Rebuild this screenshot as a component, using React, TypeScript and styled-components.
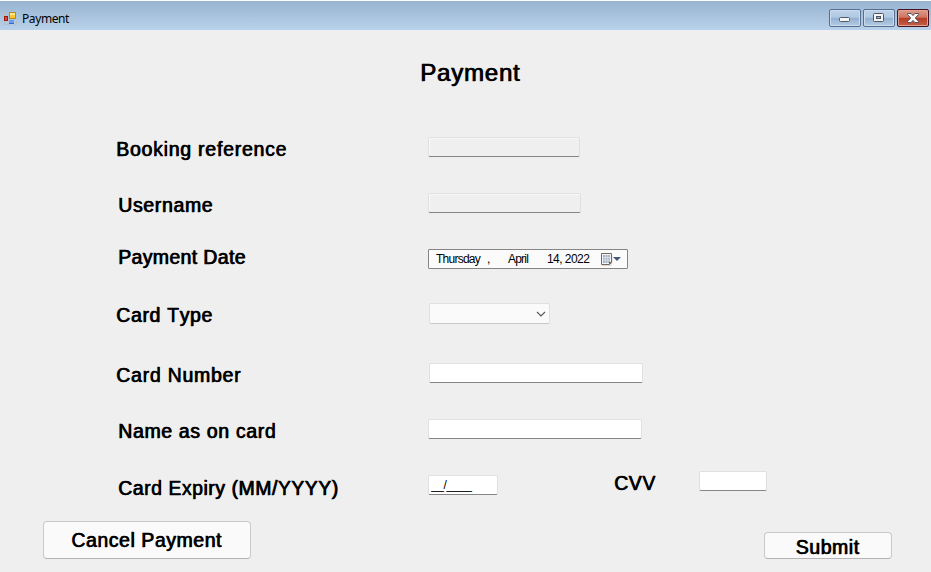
import React from "react";
import styled, { createGlobalStyle } from "styled-components";

const GlobalStyle = createGlobalStyle`
  * { box-sizing: border-box; }
  html, body { margin: 0; padding: 0; background: #efefef; overflow: hidden; }
`;

const Window = styled.div`
  display: flex;
  flex-direction: column;
  width: 931px;
  height: 572px;
  background: #efefef;
  color: #000;
  font-family: "Liberation Sans", Arial, sans-serif;
  font-kerning: none;
`;

const TitleBar = styled.header`
  display: flex;
  align-items: flex-start;
  height: 30px;
  padding: 8px 2px 0 4px;
  border-top: 1px solid #fdfdfd;
  background: linear-gradient(#98b4d1, #b9d1ea);
`;

const AppIcon = styled.svg`
  flex: none;
  margin: 2px 5px 0 0;
`;

const Caption = styled.span`
  flex: 1;
  padding-top: 1px;
  font: 12px/18px "Noto Sans", "Open Sans", sans-serif;
  letter-spacing: -0.4px;
`;

const WindowButtons = styled.div`
  display: flex;
  gap: 2px;
`;

const WindowButton = styled.button<{ $close?: boolean }>`
  display: flex;
  align-items: center;
  justify-content: center;
  width: 32px;
  height: 18px;
  padding: 0;
  border: 1px solid ${(p) => (p.$close ? "#43131f" : "#566f91")};
  border-radius: 2px;
  box-shadow: inset 0 0 0 1px ${(p) => (p.$close ? "#e3a193" : "#cbdcee")};
  background: ${(p) =>
    p.$close
      ? "linear-gradient(#dc9c8c 0%, #cf7661 46%, #b63a22 50%, #c4614a 100%)"
      : "linear-gradient(#bed2e8 0%, #b0c8e2 46%, #94b0cf 50%, #b3cce5 100%)"};
`;

const Heading = styled.h1`
  height: 107px;
  margin: 0;
  padding: 29px 0 0 420px;
  font-size: 24px;
  font-weight: 400;
  line-height: 28px;
  letter-spacing: 0.8px;
  -webkit-text-stroke: 0.3px #000;
  text-shadow: 0.7px 0 #000;
`;

const Form = styled.form`
  display: flex;
  flex-direction: column;
`;

const Row = styled.div<{ $height: number }>`
  display: flex;
  align-items: flex-start;
  height: ${(p) => p.$height}px;
`;

const Label = styled.label<{ $indent: number; $width: number; $shift?: number; $spacing?: number }>`
  flex: none;
  width: ${(p) => p.$width}px;
  padding-left: ${(p) => p.$indent}px;
  margin-top: ${(p) => p.$shift ?? 0}px;
  font-size: 19.4px;
  line-height: 25px;
  white-space: nowrap;
  letter-spacing: ${(p) => p.$spacing ?? 0.8}px;
  -webkit-text-stroke: 0.3px #000;
  text-shadow: 0.7px 0 #000;
`;

const TextBox = styled.input<{ $width: number; $shift?: number }>`
  width: ${(p) => p.$width}px;
  height: 20px;
  margin: ${(p) => p.$shift ?? 0}px 0 0;
  padding: 0 2px;
  border: 1px solid #e0e0e0;
  border-bottom-color: #858585;
  border-radius: 2px;
  outline: none;
  background: #fff;
  color: #000;
  font: 12px "Liberation Sans", Arial, sans-serif;
  letter-spacing: -0.4px;
  &:disabled {
    background: #efefef;
    box-shadow: inset 1px 1px 0 #f8f8f8;
  }
`;

const DatePicker = styled.div`
  display: flex;
  align-items: center;
  width: 200px;
  height: 20px;
  padding: 0 6px 0 7px;
  border: 1px solid #848484;
  border-radius: 1px;
  background: #fbfbfb;
  font-size: 12px;
  line-height: 18px;
  white-space: pre;
`;

const DatePart = styled.span<{ $width: number; $spacing: number }>`
  flex: none;
  width: ${(p) => p.$width}px;
  letter-spacing: ${(p) => p.$spacing}px;
`;

const Combo = styled.div`
  display: flex;
  align-items: center;
  justify-content: flex-end;
  width: 121px;
  height: 21px;
  padding-right: 3px;
  margin-left: 1px;
  border: 1px solid #e0e0e0;
  border-bottom-color: #c8c8c8;
  border-radius: 2px;
  background: #fafafa;
`;

const Footer = styled.footer`
  display: flex;
  justify-content: space-between;
  align-items: flex-end;
  height: 38px;
  padding: 0 39px 0 43px;
`;

const PushButton = styled.button<{ $width: number; $height: number; $drop: number; $spacing: number }>`
  width: ${(p) => p.$width}px;
  height: ${(p) => p.$height}px;
  padding: ${(p) => p.$drop}px 1px 0 0;
  border: 1px solid #c9c9c9;
  border-bottom-color: #b4b4b4;
  border-radius: 4px;
  background: #fafafa;
  color: #000;
  font: 19.4px/24px "Liberation Sans", Arial, sans-serif;
  letter-spacing: ${(p) => p.$spacing}px;
  font-kerning: none;
  -webkit-text-stroke: 0.3px #000;
  text-shadow: 0.7px 0 #000;
`;

const FormGlyph = () => (
  <AppIcon width="13" height="14" viewBox="0 0 13 14">
    <path d="M.5 5V1.500h4M.5 10v3.500h4M10.500 13.500h2v-4" fill="none" stroke="#b9bcc0" />
    <rect x="5.500" y="1.500" width="6" height="6" fill="#fbc92f" stroke="#b98a1c" />
    <rect x="6" y="2" width="5" height="2" fill="#ffe88a" />
    <rect x=".5" y="5.500" width="3" height="4" fill="#e0493a" stroke="#9c1a12" />
    <rect x="5" y="9" width="5" height="4" fill="#6c9cf0" />
    <path d="M5 12.500h5" stroke="#3a68c8" />
  </AppIcon>
);

const MinimizeGlyph = () => (
  <svg width="12" height="14" viewBox="0 0 12 14">
    <rect x=".5" y="6.500" width="10" height="4" rx="1" fill="#f5f5f5" stroke="#545b68" />
  </svg>
);

const MaximizeGlyph = () => (
  <svg width="12" height="10" viewBox="0 0 12 10">
    <rect x=".5" y=".5" width="10" height="8" rx="1" fill="#f5f5f5" stroke="#4c5464" />
    <rect x="3.500" y="3.500" width="4" height="2" fill="#9db7d3" stroke="#4c5464" />
  </svg>
);

const CloseGlyph = () => (
  <svg width="12" height="10" viewBox="0 0 12 10">
    <path d="M.5.500h3.700L6 2.600 7.800.5h3.700v1L8.300 5l3.200 3.500v1H7.800L6 7.400 4.200 9.500H.5v-1L3.700 5 .5 1.500z" fill="#fafafa" stroke="#555161" />
  </svg>
);

const CalendarGlyph = () => (
  <svg width="21" height="13" viewBox="0 0 21 13">
    <path d="M2 12.500h9l1-3v-7" fill="none" stroke="#ddd5cf" />
    <path d="M1.500.5h10v9l-2 2h-8z" fill="#f2f5f9" stroke="#74695f" />
    <path d="M3 2h7v8H3z" fill="#a6b3c5" />
    <path d="M3 4.500h7M3 7h7M5.300 2v8M7.800 2v8" stroke="#e9eef4" strokeWidth=".7" />
    <path d="M9 11.500V9h2.500z" fill="#645a52" />
    <path d="M13 4h8l-4 4z" fill="#45597f" />
  </svg>
);

const ChevronGlyph = () => (
  <svg width="10" height="6" viewBox="0 0 10 6">
    <path d="m1 1 4 4 4-4" fill="none" stroke="#555" strokeWidth="1.100" />
  </svg>
);

export default function App() {
  return (
    <Window>
      <GlobalStyle />
      <TitleBar>
        <FormGlyph />
        <Caption>Payment</Caption>
        <WindowButtons>
          <WindowButton aria-label="Minimize"><MinimizeGlyph /></WindowButton>
          <WindowButton aria-label="Maximize"><MaximizeGlyph /></WindowButton>
          <WindowButton aria-label="Close" $close><CloseGlyph /></WindowButton>
        </WindowButtons>
      </TitleBar>
      <Heading>Payment</Heading>
      <Form>
        <Row $height={56}>
          <Label $indent={116} $width={428}>Booking reference</Label>
          <TextBox $width={152} disabled />
        </Row>
        <Row $height={56}>
          <Label $indent={118} $width={428} $spacing={0.7}>Username</Label>
          <TextBox $width={153} disabled />
        </Row>
        <Row $height={54}>
          <Label $indent={118} $width={428} $shift={-4} $spacing={0.4}>Payment Date</Label>
          <DatePicker>
            <DatePart $width={51} $spacing={-0.75}>Thursday</DatePart>
            <DatePart $width={21} $spacing={0}>,</DatePart>
            <DatePart $width={39} $spacing={-0.8}>April</DatePart>
            <DatePart $width={53} $spacing={-0.55}>14, 2022</DatePart>
            <CalendarGlyph />
          </DatePicker>
        </Row>
        <Row $height={60}>
          <Label $indent={116} $width={428} $spacing={0.7}>Card Type</Label>
          <Combo><ChevronGlyph /></Combo>
        </Row>
        <Row $height={56}>
          <Label $indent={116} $width={429}>Card Number</Label>
          <TextBox $width={214} />
        </Row>
        <Row $height={56}>
          <Label $indent={118} $width={428} $spacing={0.7}>Name as on card</Label>
          <TextBox $width={214} />
        </Row>
        <Row $height={46}>
          <Label $indent={118} $width={428} $shift={1} $spacing={0.55}>Card Expiry (MM/YYYY)</Label>
          <TextBox $width={70} defaultValue="__/____" />
          <Label $indent={116} $width={201} $shift={-4} $spacing={0.6}>CVV</Label>
          <TextBox $width={68} $shift={-4} />
        </Row>
      </Form>
      <Footer>
        <PushButton $width={208} $height={38} $drop={0} $spacing={0.6}>Cancel Payment</PushButton>
        <PushButton $width={128} $height={27} $drop={2} $spacing={0.6}>Submit</PushButton>
      </Footer>
    </Window>
  );
}
